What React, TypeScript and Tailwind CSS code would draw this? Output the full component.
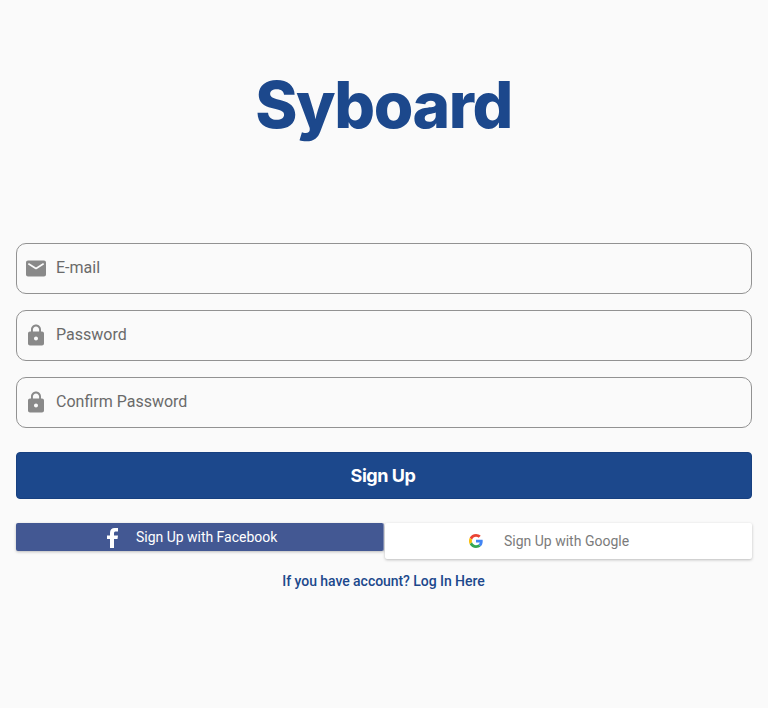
import type { ReactNode } from "react";

function MailIcon() {
  return (
    <svg viewBox="0 0.5 24 24" className="h-6 w-6 shrink-0" fill="#898989">
      <path d="M20 4H4c-1.1 0-2 .9-2 2v12c0 1.1.9 2 2 2h16c1.1 0 2-.9 2-2V6c0-1.1-.9-2-2-2zm-.4 4.25l-7.07 4.42c-.32.2-.74.2-1.06 0L4.4 8.25c-.25-.16-.4-.43-.4-.72 0-.67.73-1.07 1.3-.72L12 11l6.7-4.19c.57-.35 1.3.05 1.3.72 0 .29-.15.56-.4.72z" />
    </svg>
  );
}

function LockIcon() {
  return (
    <svg viewBox="0 0.5 24 24" className="h-6 w-6 shrink-0" fill="#898989">
      <path d="M18 8h-1V6c0-2.76-2.24-5-5-5S7 3.24 7 6v2H6c-1.1 0-2 .9-2 2v10c0 1.1.9 2 2 2h12c1.1 0 2-.9 2-2V10c0-1.1-.9-2-2-2zm-6 9c-1.1 0-2-.9-2-2s.9-2 2-2 2 .9 2 2-.9 2-2 2zm3.1-9H8.9V6c0-1.71 1.39-3.1 3.1-3.1 1.71 0 3.1 1.39 3.1 3.1v2z" />
    </svg>
  );
}

function GoogleIcon() {
  return (
    <svg viewBox="0 0 48 48" className="h-3.5 w-3.5 shrink-0">
      <path fill="#EA4335" d="M24 9.5c3.54 0 6.71 1.22 9.21 3.6l6.85-6.85C35.9 2.38 30.47 0 24 0 14.62 0 6.51 5.38 2.56 13.22l7.98 6.19C12.43 13.72 17.74 9.5 24 9.5z" />
      <path fill="#4285F4" d="M46.98 24.55c0-1.57-.15-3.09-.38-4.55H24v9.02h12.94c-.58 2.96-2.26 5.48-4.78 7.18l7.73 6c4.51-4.18 7.09-10.36 7.09-17.65z" />
      <path fill="#FBBC05" d="M10.53 28.59c-.48-1.45-.76-2.99-.76-4.59s.27-3.14.76-4.59l-7.98-6.19C.92 16.46 0 20.12 0 24c0 3.88.92 7.54 2.56 10.78l7.97-6.19z" />
      <path fill="#34A853" d="M24 48c6.48 0 11.93-2.13 15.89-5.81l-7.73-6c-2.15 1.45-4.92 2.3-8.16 2.3-6.26 0-11.57-4.22-13.47-9.91l-7.98 6.19C6.51 42.62 14.62 48 24 48z" />
    </svg>
  );
}

function Field({ icon, label }: { icon: ReactNode; label: string }) {
  return (
    <div className="flex h-[51px] items-center gap-2 rounded-[10px] border border-[#929292] pl-[7px]">
      {icon}
      <span className="mb-0.5 text-base leading-5 text-[#6a6a6a]">{label}</span>
    </div>
  );
}

export default function App() {
  return (
    <main className="h-[708px] overflow-hidden bg-[#fafafa] px-4 font-['Roboto',sans-serif]">
      <h1 className="flex h-[243px] justify-center pt-[65px] pr-px font-['Inter',sans-serif] text-[64px] leading-[80px] font-extrabold tracking-[-1.4px] text-[#1c488c]">
        Syboard
      </h1>
      <div className="flex flex-col gap-4">
        <Field icon={<MailIcon />} label="E-mail" />
        <Field icon={<LockIcon />} label="Password" />
        <Field icon={<LockIcon />} label="Confirm Password" />
      </div>
      <button className="mt-6 flex h-[47px] w-full items-center justify-center rounded-[4px] border border-[#174080] bg-[#1c488c] pr-0.5 font-['Inter',sans-serif] text-[18px] leading-6 font-bold tracking-[-0.45px] text-white">
        Sign Up
      </button>
      <div className="mt-6 flex items-start">
        <button className="flex h-7 w-[367.5px] items-center rounded-[2px] border-r border-[#8390b8] bg-[#435893] pl-[91px] text-sm text-white shadow-[0_1px_3px_rgba(0,0,0,0.25)]">
          <svg viewBox="0 0 11 20" className="mt-0.5 h-5 w-[11px] shrink-0" fill="white">
            <path d="M3 20V11H0V7.5h3V5C3 1.7 4.8 0 7.7 0H11v3.5H9C7.5 3.5 7 4.1 7 5.3v2.2h4L10.5 11H7v9z" />
          </svg>
          <span className="ml-[18px] tracking-[-0.02px]">Sign Up with Facebook</span>
        </button>
        <button className="ml-px flex h-9 w-[367.5px] items-center rounded-[2px] bg-white pl-[84.5px] text-sm text-[#7b7b7b] shadow-[0_1px_3px_rgba(0,0,0,0.25)]">
          <GoogleIcon />
          <span className="ml-[21px]">Sign Up with Google</span>
        </button>
      </div>
      <p className="mt-3 pr-px text-center text-sm leading-5 font-medium tracking-[-0.05px] text-[#1c488c]">
        If you have account? Log In Here
      </p>
    </main>
  );
}
